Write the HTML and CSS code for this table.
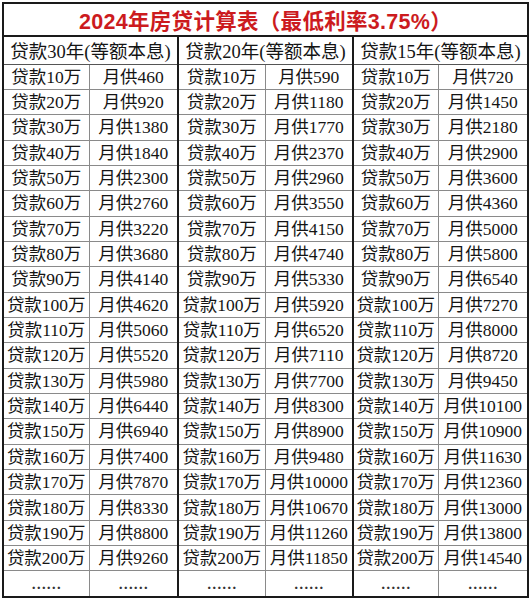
FILE: index.html
```html
<!DOCTYPE html>
<html lang="zh">
<head>
<meta charset="utf-8">
<title>2024年房贷计算表</title>
<link rel="stylesheet" href="styles.css">
</head>
<body>
<table class="loan">
  <colgroup>
    <col class="c1"><col class="c2"><col class="c3"><col class="c4"><col class="c5"><col class="c6">
  </colgroup>
  <thead>
    <tr class="title-row"><th colspan="6" class="title">2024年房贷计算表（最低利率3.75%）</th></tr>
    <tr class="head-row">
      <th colspan="2" class="grp">贷款30年(等额本息)</th>
      <th colspan="2" class="grp">贷款20年(等额本息)</th>
      <th colspan="2" class="grp">贷款15年(等额本息)</th>
    </tr>
  </thead>
  <tbody>
    <tr><td>贷款10万</td><td class="g">月供460</td><td>贷款10万</td><td class="g">月供590</td><td>贷款10万</td><td class="g">月供720</td></tr>
    <tr><td>贷款20万</td><td class="g">月供920</td><td>贷款20万</td><td class="g">月供1180</td><td>贷款20万</td><td class="g">月供1450</td></tr>
    <tr><td>贷款30万</td><td class="g">月供1380</td><td>贷款30万</td><td class="g">月供1770</td><td>贷款30万</td><td class="g">月供2180</td></tr>
    <tr><td>贷款40万</td><td class="g">月供1840</td><td>贷款40万</td><td class="g">月供2370</td><td>贷款40万</td><td class="g">月供2900</td></tr>
    <tr><td>贷款50万</td><td class="g">月供2300</td><td>贷款50万</td><td class="g">月供2960</td><td>贷款50万</td><td class="g">月供3600</td></tr>
    <tr><td>贷款60万</td><td class="g">月供2760</td><td>贷款60万</td><td class="g">月供3550</td><td>贷款60万</td><td class="g">月供4360</td></tr>
    <tr><td>贷款70万</td><td class="g">月供3220</td><td>贷款70万</td><td class="g">月供4150</td><td>贷款70万</td><td class="g">月供5000</td></tr>
    <tr><td>贷款80万</td><td class="g">月供3680</td><td>贷款80万</td><td class="g">月供4740</td><td>贷款80万</td><td class="g">月供5800</td></tr>
    <tr><td>贷款90万</td><td class="g">月供4140</td><td>贷款90万</td><td class="g">月供5330</td><td>贷款90万</td><td class="g">月供6540</td></tr>
    <tr><td>贷款100万</td><td class="g">月供4620</td><td>贷款100万</td><td class="g">月供5920</td><td>贷款100万</td><td class="g">月供7270</td></tr>
    <tr><td>贷款110万</td><td class="g">月供5060</td><td>贷款110万</td><td class="g">月供6520</td><td>贷款110万</td><td class="g">月供8000</td></tr>
    <tr><td>贷款120万</td><td class="g">月供5520</td><td>贷款120万</td><td class="g">月供7110</td><td>贷款120万</td><td class="g">月供8720</td></tr>
    <tr><td>贷款130万</td><td class="g">月供5980</td><td>贷款130万</td><td class="g">月供7700</td><td>贷款130万</td><td class="g">月供9450</td></tr>
    <tr><td>贷款140万</td><td class="g">月供6440</td><td>贷款140万</td><td class="g">月供8300</td><td>贷款140万</td><td class="g">月供10100</td></tr>
    <tr><td>贷款150万</td><td class="g">月供6940</td><td>贷款150万</td><td class="g">月供8900</td><td>贷款150万</td><td class="g">月供10900</td></tr>
    <tr><td>贷款160万</td><td class="g">月供7400</td><td>贷款160万</td><td class="g">月供9480</td><td>贷款160万</td><td class="g">月供11630</td></tr>
    <tr><td>贷款170万</td><td class="g">月供7870</td><td>贷款170万</td><td class="g">月供10000</td><td>贷款170万</td><td class="g">月供12360</td></tr>
    <tr><td>贷款180万</td><td class="g">月供8330</td><td>贷款180万</td><td class="g">月供10670</td><td>贷款180万</td><td class="g">月供13000</td></tr>
    <tr><td>贷款190万</td><td class="g">月供8800</td><td>贷款190万</td><td class="g">月供11260</td><td>贷款190万</td><td class="g">月供13800</td></tr>
    <tr><td>贷款200万</td><td class="g">月供9260</td><td>贷款200万</td><td class="g">月供11850</td><td>贷款200万</td><td class="g">月供14540</td></tr>
    <tr class="more"><td>……</td><td class="g">……</td><td>……</td><td class="g">……</td><td>……</td><td class="g">……</td></tr>
  </tbody>
</table>
</body>
</html>
```
FILE: styles.css
```css
html, body {
  margin: 0;
  padding: 0;
  background: #ffffff;
}

body {
  padding: 2px 0 0 2px;
}

.loan {
  border-collapse: collapse;
  table-layout: fixed;
  width: 525px;
  border: 2px solid #1a1a1a;
  font-family: "Liberation Serif", "Noto Sans CJK SC", serif;
  color: #141414;
}

.c1 { width: 86px; }
.c2 { width: 89px; }
.c3 { width: 87px; }
.c4 { width: 88px; }
.c5 { width: 85px; }
.c6 { width: 90px; }

.loan th,
.loan td {
  padding: 0;
  text-align: center;
  white-space: nowrap;
  overflow: hidden;
  border: 1px solid #8a8a8a;
}

.title-row { height: 32px; }

.title {
  font-family: "Liberation Sans", "Noto Sans CJK SC", sans-serif;
  font-weight: bold;
  font-size: 21.5px;
  color: #cc1b1e;
  letter-spacing: 0.3px;
  border-bottom: 2px solid #1a1a1a !important;
}

.head-row { height: 28px; }

.grp {
  font-weight: normal;
  font-size: 18.5px;
  border-bottom: 1px solid #555 !important;
}

.loan .grp,
.loan td.g {
  border-right: 2px solid #1a1a1a;
}

.loan tbody tr { height: 25.35px; }

.loan td {
  font-size: 17.5px;
  line-height: 20px;
}

.loan tr.more { height: 26px; }

.more td {
  font-weight: bold;
  font-size: 15px;
  letter-spacing: 0;
  color: #333;
}
```
